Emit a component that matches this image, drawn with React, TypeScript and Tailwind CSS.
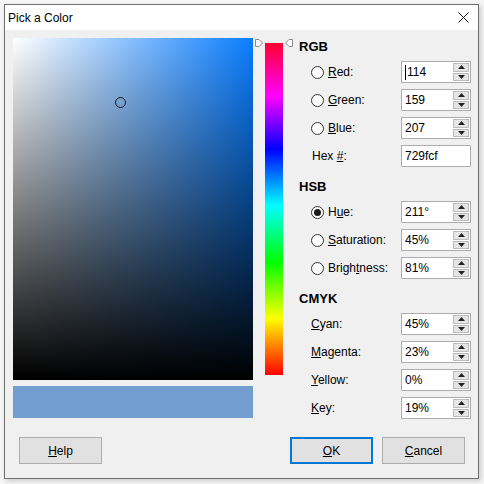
import type { ReactNode } from "react";

const font = "font-['Liberation_Sans',Arial,sans-serif]";

function Radio({ checked }: { checked?: boolean }) {
  return (
    <span className="flex h-[13px] w-[13px] shrink-0 items-center justify-center rounded-full border border-[#333] bg-white">
      {checked && <span className="h-[7px] w-[7px] rounded-full bg-[#1a1a1a]" />}
    </span>
  );
}

function Arrow({ up }: { up?: boolean }) {
  return (
    <svg width="7" height="4" viewBox="0 0 7 4">
      <path d={up ? "M0 4 L3.5 0 L7 4 Z" : "M0 0 L3.5 4 L7 0 Z"} fill="#222" />
    </svg>
  );
}

function SpinField({ value, caret, spin = true }: { value: string; caret?: boolean; spin?: boolean }) {
  return (
    <div className="flex h-[22px] w-[70px] items-center border border-[#adadad] bg-white">
      <div className="flex flex-1 items-center pl-[3px] text-[12px] text-black">
        {caret && <span className="mr-[1px] h-[15px] w-px bg-black" />}
        {value}
      </div>
      {spin && (
        <div className="mr-px flex h-[18px] w-[16px] flex-col gap-px">
          <span className="flex flex-1 items-center justify-center border border-[#bcbcbc] bg-[#e5e5e5]">
            <Arrow up />
          </span>
          <span className="flex flex-1 items-center justify-center border border-[#bcbcbc] bg-[#e5e5e5]">
            <Arrow />
          </span>
        </div>
      )}
    </div>
  );
}

function Row({
  label,
  value,
  radio,
  checked,
  caret,
  spin,
  indent = 12,
}: {
  label: ReactNode;
  value: string;
  radio?: boolean;
  checked?: boolean;
  caret?: boolean;
  spin?: boolean;
  indent?: number;
}) {
  return (
    <div className="flex h-[28px] items-center">
      <div className={`flex w-[102px] items-center gap-[4px] ${indent === 12 ? "pl-[12px]" : "pl-[13px]"}`}>
        {radio && <Radio checked={checked} />}
        <span className="text-[12px] text-black">{label}</span>
      </div>
      <SpinField value={value} caret={caret} spin={spin} />
    </div>
  );
}

function Heading({ children, first }: { children: ReactNode; first?: boolean }) {
  return (
    <div className={`flex h-[20px] items-center pb-[2px] text-[13px] font-bold text-black ${first ? "" : "mt-[8px]"}`}>
      {children}
    </div>
  );
}

function Button({ children, focused }: { children: ReactNode; focused?: boolean }) {
  return (
    <button
      className={`flex h-[27px] w-[83px] items-center justify-center bg-[#e1e1e1] text-[12px] text-black ${
        focused ? "border-2 border-[#0078d7]" : "border border-[#adadad]"
      }`}
    >
      {children}
    </button>
  );
}

function Marker({ flip }: { flip?: boolean }) {
  return (
    <svg width="8" height="8" viewBox="0 0 8 8" className={flip ? "-scale-x-100" : ""}>
      <path d="M0.5 0.5 H4 L7.5 4 L4 7.5 H0.5 Z" fill="#fff" stroke="#8a8a8a" />
    </svg>
  );
}

export default function App() {
  return (
    <div className={`h-[484px] w-[484px] bg-[#f6f6f6] pl-[4px] pt-[4px] ${font}`}>
      <div className="flex h-[475px] w-[475px] flex-col border border-[#6f6f6f] shadow-[2px_2px_5px_rgba(0,0,0,0.18)]">
        {/* title bar */}
        <div className="flex h-[25px] items-center justify-between bg-white pl-[3px] pr-[9px]">
          <span className="text-[12px] text-black">Pick a Color</span>
          <svg width="11" height="11" viewBox="0 0 11 11">
            <path d="M0.5 0.5 L10.5 10.5 M10.5 0.5 L0.5 10.5" stroke="#111" strokeWidth="1" />
          </svg>
        </div>

        <div className="flex flex-1 flex-col bg-[#f0f0f0]">
          <div className="flex pl-[8px] pt-[8px]">
            {/* saturation / brightness field and preview */}
            <div className="flex flex-col gap-[6px]">
              <div className="relative h-[342px] w-[240px] bg-[linear-gradient(to_bottom,rgba(0,0,0,0),#000),linear-gradient(to_right,#fff,#0a7dff)]">
                <span className="absolute left-[102px] top-[59px] h-[11px] w-[11px] rounded-full border border-[#111]" />
              </div>
              <div className="h-[32px] w-[240px] bg-[#729fcf]" />
            </div>

            {/* hue slider */}
            <div className="relative w-[46px] pl-[12px] pt-[5px]">
              <div className="h-[332px] w-[18px] bg-[linear-gradient(to_bottom,#ff0030,#ff00ff_16%,#0000ff_32%,#00ffff_49%,#00ff00_66%,#ffff00_83%,#ff0000)]" />
              <span className="absolute left-[2px] top-[1px] flex">
                <Marker />
              </span>
              <span className="absolute left-[32px] top-[1px] flex">
                <Marker flip />
              </span>
            </div>

            {/* numeric fields */}
            <div className="flex flex-col">
              <Heading first>RGB</Heading>
              <Row radio caret value="114" label={<><u>R</u>ed:</>} />
              <Row radio value="159" label={<><u>G</u>reen:</>} />
              <Row radio value="207" label={<><u>B</u>lue:</>} />
              <Row spin={false} indent={13} value="729fcf" label={<>Hex <u>#</u>:</>} />

              <Heading>HSB</Heading>
              <Row radio checked value="211°" label={<>H<u>u</u>e:</>} />
              <Row radio value="45%" label={<><u>S</u>aturation:</>} />
              <Row radio value="81%" label={<>Brigh<u>t</u>ness:</>} />

              <Heading>CMYK</Heading>
              <Row value="45%" label={<><u>C</u>yan:</>} />
              <Row value="23%" label={<><u>M</u>agenta:</>} />
              <Row value="0%" label={<><u>Y</u>ellow:</>} />
              <Row value="19%" label={<><u>K</u>ey:</>} />
            </div>
          </div>

          {/* dialog buttons */}
          <div className="mt-auto flex items-center pb-[14px] pl-[14px] pr-[13px]">
            <Button>
              <u>H</u>elp
            </Button>
            <div className="flex-1" />
            <div className="flex gap-[9px]">
              <Button focused>
                <u>O</u>K
              </Button>
              <Button>
                <u>C</u>ancel
              </Button>
            </div>
          </div>
        </div>
      </div>
    </div>
  );
}
